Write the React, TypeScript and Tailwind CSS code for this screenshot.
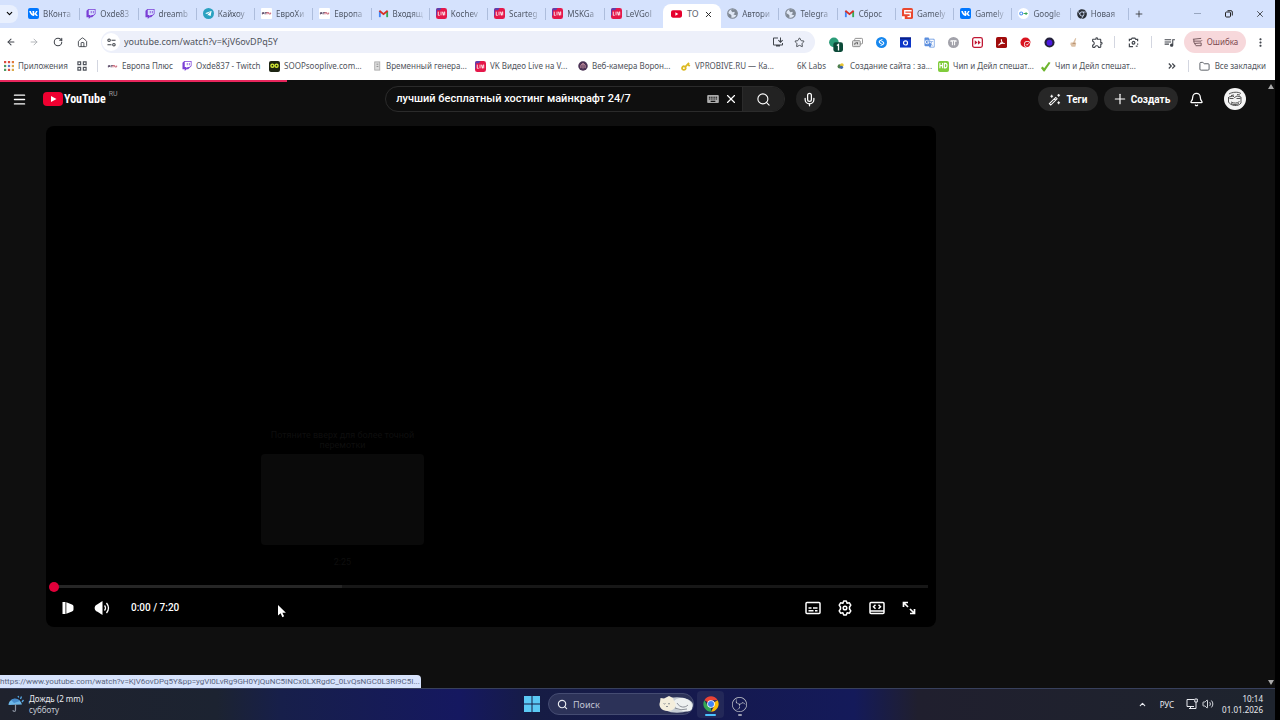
import type { ReactNode } from "react";
import {
  ArrowLeft, ArrowRight, ChevronDown, ChevronUp, Folder, House,
  Menu, Mic, Plus, RotateCw, Search, Star, X, Volume2, Bell,
} from "lucide-react";
import { FaTwitch, FaVk, FaTelegramPlane, FaChrome } from "react-icons/fa";
import { MdQueueMusic, MdOutlineInstallDesktop, MdMoreVert, MdGTranslate, MdOutlineExtension, MdKeyboard, MdVpnKey } from "react-icons/md";
import { SiObsstudio } from "react-icons/si";

const Sq = ({ cls, children }: { cls: string; children?: ReactNode }) => (
  <span className={`flex size-[11px] shrink-0 items-center justify-center overflow-hidden rounded-[2px] ${cls}`}>{children}</span>
);

const VkIcon = () => <Sq cls="bg-[#0077ff] text-white"><FaVk size={9} /></Sq>;
const TwitchIcon = () => <FaTwitch size={10} className="shrink-0 text-[#7b3fd6]" />;
const TelegramIcon = () => (
  <span className="flex size-[11px] shrink-0 items-center justify-center rounded-full bg-[#2aa1c0] text-white"><FaTelegramPlane size={7} /></span>
);
const EuropaIcon = () => (
  <svg viewBox="0 0 12 12" className="size-[11px] shrink-0">
    <rect width="12" height="12" rx="1" fill="#fff" />
    <path d="M1.500 7V5h2M1.500 6h2M4.500 7V5h2" stroke="#5a4a68" fill="none" />
    <path d="M6.500 7V5h2v1.500h2V5" stroke="#c65a6c" fill="none" />
  </svg>
);
const GmailIcon = () => (
  <svg viewBox="0 0 12 12" className="size-[11px] shrink-0" fill="none" strokeWidth="2">
    <path d="M2 10V3.500" stroke="#4285f4" />
    <path d="M10 10V3.500" stroke="#34a853" />
    <path d="M1.500 3 6 6.700 10.500 3" stroke="#d93025" />
  </svg>
);
const LiveIcon = () => (
  <svg viewBox="0 0 12 12" className="size-[11px] shrink-0">
    <rect width="12" height="12" rx="2.500" fill="#e5184a" />
    <path d="M0 9V2.500A2.500 2.500 0 0 1 2.500 0H6z" fill="#5b3fb0" />
    <path d="M1 2.500h10v7H1z" fill="#e5184a" />
    <path d="M2.500 4v4h1.500M5.500 4v4M7 4l1 4 1-4M9.500 4v4" stroke="#fff" strokeWidth=".9" fill="none" />
  </svg>
);
const YtIcon = () => (
  <svg viewBox="0 0 12 8" className="h-[8px] w-[11px] shrink-0">
    <rect width="12" height="8" rx="2" fill="#e6002d" />
    <path d="m4.800 2 3.200 2-3.200 2z" fill="#fff" />
  </svg>
);
const GlobeIcon = () => (
  <svg viewBox="0 0 12 12" className="size-[11px] shrink-0">
    <circle cx="6" cy="6" r="5.200" fill="#dfe7f5" stroke="#7f8894" strokeWidth="1.300" />
    <path d="M1 5.500 4 7l1 1.500L4.500 11 2 9.500zM5 1l-.5 2L6 4.500 8 4l.5 1.500L7 7l2 .5 1.500.5 1-2.500L9.500 2z" fill="#7f8894" />
  </svg>
);
const GamelyIcon = () => (
  <svg viewBox="0 0 12 12" className="size-[11px] shrink-0">
    <rect width="12" height="12" rx="2" fill="#e9472f" />
    <path d="M10.500 3H3v3h6v3.500H6" stroke="#fff" strokeWidth="1.400" fill="none" />
    <path d="M0 9h3v3H0z" fill="#fff" />
  </svg>
);
const GoogleKeyIcon = () => (
  <svg viewBox="0 0 12 12" className="size-[11px] shrink-0">
    <circle cx="6" cy="6" r="6" fill="#fff" />
    <circle cx="3.500" cy="6" r="1.600" fill="none" stroke="#4a8df0" strokeWidth="1.100" />
    <path d="M6 6h4.500M8.800 4.500v3" stroke="#3aa757" strokeWidth="1.200" />
  </svg>
);
const ChromeDark = () => <FaChrome size={10} className="shrink-0 text-[#2b3038]" />;
const ChromeColor = () => (
  <svg viewBox="0 0 48 48" className="size-4">
    <path d="M24 24 4.100 12.500A23 23 0 0 1 43.900 12.500H24z" fill="#ea4335" />
    <path d="M24 24 43.900 12.500A23 23 0 0 1 24 47L34 29.500z" fill="#fbbc04" />
    <path d="M24 24 24 47A23 23 0 0 1 4.100 12.500L14 29.500z" fill="#34a853" />
    <circle cx="24" cy="24" r="11.500" fill="#fff" />
    <circle cx="24" cy="24" r="9" fill="#4285f4" />
  </svg>
);

const tabs: { icon: ReactNode; label: string; active?: boolean }[] = [
  { icon: <VkIcon />, label: "ВКонта" },
  { icon: <TwitchIcon />, label: "Oxde83" },
  { icon: <TwitchIcon />, label: "dreamb" },
  { icon: <TelegramIcon />, label: "Кайхоу" },
  { icon: <EuropaIcon />, label: "ЕвроХи" },
  { icon: <EuropaIcon />, label: "Европа" },
  { icon: <GmailIcon />, label: "Входящ" },
  { icon: <LiveIcon />, label: "Kochev" },
  { icon: <LiveIcon />, label: "Scarteg" },
  { icon: <LiveIcon />, label: "MSKGa" },
  { icon: <LiveIcon />, label: "LeVGol" },
  { icon: <YtIcon />, label: "ТО", active: true },
  { icon: <GlobeIcon />, label: "Автори" },
  { icon: <GlobeIcon />, label: "Telegra" },
  { icon: <GmailIcon />, label: "Сброс" },
  { icon: <GamelyIcon />, label: "Gamely" },
  { icon: <VkIcon />, label: "Gamely" },
  { icon: <GoogleKeyIcon />, label: "Google" },
  { icon: <ChromeDark />, label: "Новая" },
];

function TabStrip() {
  return (
    <div className="flex h-7 items-stretch bg-[#d5e2fd] font-['Noto_Sans','Open_Sans',sans-serif]">
      <button aria-label="Поиск вкладок" className="flex w-[22px] items-center pb-px">
        <span className="flex h-[18px] w-[18px] items-center justify-center rounded-r-lg bg-[#e9f0fe]"><ChevronDown size={9} strokeWidth={3} /></span>
      </button>
      <div role="tablist" className="grid flex-1 grid-cols-[repeat(19,minmax(0,1fr))]">
        {tabs.map((t, i) =>
          t.active ? (
            <div key={i} className="mt-1 flex items-center rounded-t-lg bg-white pb-1 pl-2">
              <button role="tab" aria-selected="true" className="flex items-center gap-[5px] text-[9px] text-[#5f6470]">{t.icon}{t.label}</button>
              <button aria-label="Закрыть вкладку" className="ml-auto mr-2 text-[#222]"><X size={9} strokeWidth={2.500} /></button>
            </div>
          ) : (
            <button key={i} role="tab" aria-selected="false" className="flex min-w-0 items-center gap-1 pb-px pl-[6px] text-[8px] text-[#4f5766]">
              {t.icon}
              <span className="min-w-0 flex-1 whitespace-nowrap text-left [mask-image:linear-gradient(to_right,#000_60%,transparent)]">{t.label}</span>
              <span className={`h-3 w-px shrink-0 ${i === 10 ? "" : "bg-[#adbddc]"}`} />
            </button>
          )
        )}
      </div>
      <button aria-label="Новая вкладка" className="flex w-5 items-center justify-center pb-px text-[#333]"><Plus size={10} /></button>
      <div className="ml-[33px] flex pb-px text-[#222]">
        <button aria-label="Свернуть" className="flex w-[31px] items-center justify-center"><span className="h-px w-[7px] bg-[#98a6bf]" /></button>
        <button aria-label="Развернуть" className="flex w-[31px] items-center justify-center">
          <svg viewBox="0 0 8 8" className="size-2" fill="none" stroke="currentColor"><rect x=".5" y="2" width="5" height="5" rx="1" /><path d="M2.500.7H6A1.300 1.300 0 0 1 7.300 2v3.500" /></svg>
        </button>
        <button aria-label="Закрыть" className="flex w-[31px] items-center justify-center"><X size={10} strokeWidth={1.800} /></button>
      </div>
    </div>
  );
}

const extensions: { name: string; icon: ReactNode }[] = [
  {
    name: "Блокировщик",
    icon: <svg viewBox="0 0 14 14" className="mt-1 ml-1 size-[15px]"><circle cx="5.500" cy="5" r="4.500" fill="#2b9c78" /><rect x="5" y="5" width="9" height="9" rx="2" fill="#0b4a38" /><path d="m8.300 8 1.500-1v5.500" stroke="#fff" strokeWidth="1.200" fill="none" /></svg>,
  },
  {
    name: "Окна",
    icon: <svg viewBox="0 0 12 12" className="size-[11px]" fill="none" stroke="#888"><rect x="3" y="1.500" width="8.500" height="6" rx="1" /><rect x=".5" y="4" width="8.500" height="6.500" rx="1" fill="#ddd" /><path d="M3 8.500V7l3-1v2" stroke="#555" /></svg>,
  },
  {
    name: "Shazam",
    icon: <svg viewBox="0 0 12 12" className="size-[11px]"><circle cx="6" cy="6" r="6" fill="#1787ee" /><path d="M6 7.300C3.500 6.500 2.800 4.800 4.300 4L7 2.600M6 4.700c2.500.8 3.200 2.500 1.700 3.300L5 9.400" stroke="#fff" strokeWidth="1.200" fill="none" /></svg>,
  },
  {
    name: "Камера",
    icon: <svg viewBox="0 0 12 12" className="size-[11px]"><rect y=".5" width="12" height="11" fill="#0c36c8" /><path d="M0 .5h12v2H0z" fill="#0a1f86" /><circle cx="6" cy="6.500" r="2.200" fill="none" stroke="#fff" strokeWidth="1.300" /></svg>,
  },
  { name: "Переводчик", icon: <MdGTranslate size={11} className="text-[#5b8ede]" /> },
  {
    name: "Tampermonkey",
    icon: <svg viewBox="0 0 12 12" className="size-[11px]"><circle cx="6" cy="6" r="6" fill="#a2a2aa" /><path d="M3 4h6M4.800 4v5M7.200 4v5M3.300 3.500v2M8.700 3.500v2" stroke="#fff" strokeWidth="1.100" /></svg>,
  },
  {
    name: "Ускоритель",
    icon: <svg viewBox="0 0 12 12" className="size-[11px]"><rect x=".7" y=".7" width="10.600" height="10.600" rx="2" fill="#fff" stroke="#c01834" strokeWidth="1.400" /><path d="m3 3.500 3 2.500-3 2.500zM6.500 3.500l3 2.500-3 2.500z" fill="#c01834" /></svg>,
  },
  {
    name: "Acrobat",
    icon: <svg viewBox="0 0 12 12" className="size-[11px]"><rect width="12" height="12" rx="2" fill="#a00c0c" /><path d="M5.800 2.500c1 2.500-1 5-3 6.500 1.500-1.800 4.500-2.500 6.700-2C7.500 7.500 5.500 5 5.800 2.500" stroke="#fff" strokeWidth="1.100" fill="none" /></svg>,
  },
  {
    name: "Блокировка",
    icon: <svg viewBox="0 0 12 12" className="size-[11px]"><circle cx="6" cy="6" r="5.500" fill="#d9141f" /><circle cx="8" cy="8" r="3.600" fill="#fff" /><circle cx="8" cy="8" r="2.800" fill="#d9141f" /><path d="m6.700 8 1 1 1.700-2" stroke="#fff" fill="none" /></svg>,
  },
  {
    name: "Тема",
    icon: <svg viewBox="0 0 12 12" className="size-[11px]"><circle cx="6" cy="6" r="5.500" fill="#23203a" /><circle cx="6" cy="6.300" r="3.200" fill="#4b1ae0" /></svg>,
  },
  {
    name: "Жест",
    icon: <svg viewBox="0 0 12 12" className="size-[11px]"><path d="M3 6h2.500L8 1l1 .5L7.800 5.500 9 7 8 10.500H4L2.500 8z" fill="#dcc1a6" /><path d="M5 7h3" stroke="#b48b6a" /></svg>,
  },
];

function Toolbar() {
  return (
    <div className="flex h-7 items-center bg-white font-['Noto_Sans','Open_Sans',sans-serif] text-[#41454c]">
      <div className="flex">
        <button aria-label="Назад" className="flex w-[22px] justify-center"><ArrowLeft size={10} strokeWidth={2.500} /></button>
        <button aria-label="Вперёд" className="flex w-6 justify-center text-[#a5a8ad]"><ArrowRight size={10} /></button>
        <button aria-label="Обновить" className="flex w-6 justify-center"><RotateCw size={10} strokeWidth={2.500} /></button>
        <button aria-label="Главная" className="flex w-6 justify-center"><House size={11} /></button>
      </div>
      <div className="ml-[7px] flex h-[22px] flex-1 items-center rounded-full bg-[#edf0fa] pl-[1px] pr-[10px]">
        <button aria-label="Сведения о сайте" className="flex size-[18px] items-center justify-center rounded-full bg-white">
          <svg viewBox="0 0 10 10" className="size-[9px]" fill="none" stroke="currentColor" strokeWidth="1.200"><circle cx="2.300" cy="2.500" r="1.400" /><path d="M5 2.500h4.500M.5 7.500H5" /><circle cx="7.700" cy="7.500" r="1.400" /></svg>
        </button>
        <input aria-label="Адресная строка" defaultValue="youtube.com/watch?v=KjV6ovDPq5Y" className="ml-1 min-w-0 flex-1 bg-transparent text-[9px] text-[#50545c] outline-none" />
        <button aria-label="Установить" className="mr-[10px]"><MdOutlineInstallDesktop size={12} /></button>
        <button aria-label="Добавить в закладки"><Star size={11} /></button>
      </div>
      <div className="flex pl-[6px]">
        {extensions.map((e) => (
          <button key={e.name} aria-label={e.name} className="flex h-5 w-6 items-center justify-center">{e.icon}</button>
        ))}
        <button aria-label="Расширения" className="flex h-5 w-6 items-center justify-center"><MdOutlineExtension size={13} /></button>
      </div>
      <span className="ml-[5px] h-3 w-px bg-[#d3d6e0]" />
      <button aria-label="Объектив" className="flex w-9 justify-center">
        <svg viewBox="0 0 12 12" className="size-[11px]" fill="none" stroke="currentColor" strokeWidth="1.300"><path d="M1.500 4.500v-2h2l1-1.200h3l1 1.200h2v2M1.500 7v3.500h4M10.500 7v1.500" /><circle cx="6" cy="6.300" r="1.500" /><path d="M8.500 10h2" /></svg>
      </button>
      <span className="h-3 w-px bg-[#d3d6e0]" />
      <button aria-label="Медиа" className="flex w-8 justify-center pl-[3px]"><MdQueueMusic size={13} /></button>
      <button className="flex h-[22px] w-[62px] items-center justify-center gap-1 rounded-full bg-[#f7d8db] text-[8px] text-[#7d4a50]">
        <svg viewBox="0 0 12 12" className="size-[11px]" fill="none" stroke="#6c5055"><path d="M1 2.500 10 1.500M2 4.500h8l1-1M3 7l7-.5M4 9.500h6M2 2.500v3L4 9M10 6.500v3" /></svg>
        Ошибка
      </button>
      <button aria-label="Меню браузера" className="flex w-[29px] justify-center"><MdMoreVert size={13} /></button>
    </div>
  );
}

const appDots = ["#d94a3d", "#d94a3d", "#e0793b", "#4c9a63", "#5a7ac9", "#dba94a", "#4c9a63", "#d94a3d", "#dba94a"];
const AppsIcon = () => (
  <svg viewBox="0 0 9 9" className="size-[10px] shrink-0">
    {appDots.map((c, i) => <rect key={i} x={(i % 3) * 3.500} y={Math.floor(i / 3) * 3.500} width="2" height="2" fill={c} />)}
  </svg>
);

const bookmarks: { w: string; icon: ReactNode; label: string }[] = [
  { w: "w-[75px]", icon: <EuropaIcon />, label: "Европа Плюс" },
  { w: "w-[87px]", icon: <TwitchIcon />, label: "Oxde837 - Twitch" },
  { w: "w-[103px]", icon: <Sq cls="bg-[#1d2412] text-[#d7ee36]"><svg viewBox="0 0 10 6" className="w-[9px]" fill="none" stroke="currentColor" strokeWidth="1.500"><circle cx="2.700" cy="3" r="1.700" /><circle cx="7.300" cy="3" r="1.700" /></svg></Sq>, label: "SOOPsooplive.com..." },
  { w: "w-[103px]", icon: <svg viewBox="0 0 11 11" className="size-[10px] shrink-0" fill="#ddd" stroke="#aaa"><rect x="3" y="1" width="5.500" height="9" /><path d="M5 3.500h2M5 6h2" stroke="#888" /></svg>, label: "Временный генера..." },
  { w: "w-[103px]", icon: <LiveIcon />, label: "VK Видео Live на V..." },
  { w: "w-[102px]", icon: <svg viewBox="0 0 12 12" className="size-[10px] shrink-0"><circle cx="6" cy="6" r="5.700" fill="#4b3355" /><path d="M3.500 8.500V5L6 3l2.500 2v3.500M6 3v6" stroke="#e5a6b2" fill="none" /></svg>, label: "Веб-камера Ворон..." },
  { w: "w-[102px]", icon: <MdVpnKey size={11} className="shrink-0 -rotate-45 text-[#dcb922]" />, label: "VPROBIVE.RU — Ка..." },
  { w: "w-[54px]", icon: <span className="size-[11px] shrink-0" />, label: "6K Labs" },
  { w: "w-[102px]", icon: <svg viewBox="0 0 11 11" className="size-[10px] shrink-0"><circle cx="4" cy="6" r="2.300" fill="#50804d" /><circle cx="6.500" cy="4.500" r="2" fill="#e8c532" /><circle cx="6" cy="7" r="1.800" fill="#3f66ad" /></svg>, label: "Создание сайта : за..." },
  { w: "w-[102px]", icon: <Sq cls="bg-[#80cc3c] text-white"><svg viewBox="0 0 10 8" className="w-[9px]" fill="none" stroke="currentColor" strokeWidth="1.200"><path d="M1 1v6M4 1v6M1 4h3M6 1.500h1c2.500 0 2.500 5 0 5H6z" /></svg></Sq>, label: "Чип и Дейл спешат..." },
  { w: "w-[102px]", icon: <svg viewBox="0 0 12 12" className="size-[11px] shrink-0"><path d="m1 7.500 2-1.500 1.500 2L9.500 1 11.500 2 5 11.500H4z" fill="#6eb52f" /></svg>, label: "Чип и Дейл спешат..." },
];

function BookmarkBar() {
  return (
    <nav aria-label="Закладки" className="flex h-6 items-center bg-white pb-1 pl-1 font-['Noto_Sans','Open_Sans',sans-serif] text-[8px] text-[#4f535b]">
      <a href="#apps" className="flex w-[73px] items-center gap-1 whitespace-nowrap"><AppsIcon />Приложения</a>
      <a href="#groups" aria-label="Группы вкладок" className="flex w-5 items-center">
        <svg viewBox="0 0 11 11" className="size-[10px]" fill="none" stroke="#50545c" strokeWidth="1.300"><path d="M1 1h3v3H1zM7 1h3v3H7zM1 7h3v3H1zM7 7h3v3H7z" /></svg>
      </a>
      <span className="mr-[9px] h-3 w-px bg-[#d3d6e0]" />
      {bookmarks.map((b, i) => (
        <a key={i} href="#bookmark" className={`flex shrink-0 items-center gap-1 whitespace-nowrap ${b.w}`}>{b.icon}{b.label}</a>
      ))}
      <button aria-label="Другие закладки" className="ml-auto pr-3">
        <svg viewBox="0 0 8 6" className="h-[6px] w-2" fill="none" stroke="#41454c" strokeWidth="1.200"><path d="m.8.500 2.500 2.500L.8 5.500M4.300.5 6.800 3 4.300 5.500" /></svg>
      </button>
      <span className="mr-[10px] h-3 w-px bg-[#d3d6e0]" />
      <a href="#all" className="flex items-center gap-[5px] whitespace-nowrap pr-[9px]"><Folder size={11} />Все закладки</a>
    </nav>
  );
}

function YtHeader() {
  return (
    <header className="flex h-[34px] items-center text-white">
      <button aria-label="Меню" className="ml-3">
        <Menu size={15} strokeWidth={2.300} />
      </button>
      <a href="#home" aria-label="YouTube" className="ml-4 flex items-center">
        <svg viewBox="0 0 20 14" className="h-[14px] w-[20px]"><rect width="20" height="14" rx="4" fill="#f00030" /><path d="m8 4 5.500 3L8 10z" fill="#fff" /></svg>
        <span className="ml-px font-['Roboto_Condensed','Liberation_Sans_Narrow',sans-serif] text-[12px] font-bold leading-none">YouTube</span>
        <span className="-mt-px ml-[3px] self-start text-[7px] leading-none text-[#999]">RU</span>
      </a>
      <div className="ml-auto flex items-center pl-[52px]">
        <form role="search" className="flex h-[26px] w-[400px] overflow-hidden rounded-full border border-[#2b2b2b]">
          <input aria-label="Поиск" defaultValue="лучший бесплатный хостинг майнкрафт 24/7" className="min-w-0 flex-1 bg-transparent pl-[10px] text-[11px] font-medium outline-none" />
          <button type="button" aria-label="Клавиатура" className="text-[#aaa]"><MdKeyboard size={14} /></button>
          <button type="button" aria-label="Очистить" className="px-1"><X size={14} /></button>
          <button type="button" aria-label="Найти" className="flex w-[42px] items-center justify-center border-l border-[#2b2b2b] bg-[#222]"><Search size={15} strokeWidth={1.800} /></button>
        </form>
        <button aria-label="Голосовой поиск" className="ml-[11px] flex size-[26px] items-center justify-center rounded-full bg-[#222]"><Mic size={15} /></button>
      </div>
      <div className="ml-auto flex items-center pr-[20px] text-[10px] font-bold">
        <button className="mr-[6px] flex h-6 w-[60px] items-center justify-center gap-[5px] rounded-full bg-[#272727]">
          <svg viewBox="0 0 14 14" className="size-[13px]" fill="none" stroke="currentColor" strokeWidth="1.100"><path d="m1.500 11.500 6.800-6.800 1.500 1.500-6.800 6.800zM6.700 6.300 8.200 7.800M4 2v3M2.500 3.500h3M11.500 1v3M10 2.500h3M11.500 9v3M10 10.500h3" /></svg>
          Теги
        </button>
        <button className="mr-[11px] flex h-6 w-[74px] items-center justify-center gap-[3px] rounded-full bg-[#272727]"><Plus size={16} strokeWidth={1.800} />Создать</button>
        <button aria-label="Уведомления" className="mr-[20px]"><Bell size={15} /></button>
        <button aria-label="Профиль">
          <svg viewBox="0 0 22 22" className="size-[22px]"><circle cx="11" cy="11" r="11" fill="#f4f4f4" /><path d="M5 6c3-2 9-2.500 12-.5M5 9l4-1 1.500 1.500L13 8l4 1M5.500 10.500h4M12.500 10.500h4M4.500 9v5c2 4 10 5 12.500 1V9M7 14c3 1.500 6 1.500 8.500-.5M7 15.500c3 1.500 5 1.500 8 0M7 7.500l3-.5M13 6.500l3 .5" fill="none" stroke="#444" strokeWidth=".9" /></svg>
        </button>
      </div>
    </header>
  );
}

function Player() {
  return (
    <section aria-label="Видеоплеер" className="relative flex aspect-video min-w-0 flex-1 flex-col justify-end rounded-lg bg-black px-2 text-white">
      <div className="absolute bottom-[60px] left-[215px] flex w-[163px] flex-col items-center text-[9px] leading-[10px] text-[#0e0e0e]">
        <p className="text-center">Потяните вверх для более точной перемотки</p>
        <div className="mb-3 mt-1 h-[91px] w-full rounded bg-[#0a0a0a]" />
        <span>2:25</span>
      </div>
      <div className="relative flex h-[10px] items-center">
        <div className="h-[3px] w-[33%] bg-[#262626]" />
        <div className="h-[3px] flex-1 bg-[#171717]" />
        <span className="absolute -left-[5px] size-[10px] rounded-full bg-[#e1003a]" />
      </div>
      <div className="flex h-[35px] items-center pb-[3px] pl-[6px]">
        <button aria-label="Смотреть" className="flex w-4 justify-center">
          <svg viewBox="0 0 14 14" className="size-[14px]" fill="currentColor"><path d="M1.500 1h3v12h-3zM5.300 1.200 11 3.500q1.500.7 1.500 2v3q0 1.300-1.500 2l-5.700 2.300z" /></svg>
        </button>
        <button aria-label="Звук" className="ml-[18px]">
          <svg viewBox="0 0 16 16" className="size-4"><path d="M8.500 1v14L3.500 11.800C-.3 10.500-.3 5.500 3.500 4.200z" fill="currentColor" /><path d="M10.500 5.500q2 2.500 0 5M12.500 3q4 5 0 10" stroke="currentColor" strokeWidth="1.300" fill="none" /></svg>
        </button>
        <span className="ml-[21px] text-[10px] font-medium">0:00 / 7:20</span>
        <div className="ml-auto flex gap-4 pr-[11px]">
          <button aria-label="Субтитры">
            <svg viewBox="0 0 16 16" className="size-4" fill="none" stroke="currentColor" strokeWidth="1.500"><rect x="1" y="2.500" width="14" height="11" rx="1" /><path d="M3.500 8h3M8 8h4.500M3.500 10.800h5M10 10.800h2.500" /></svg>
          </button>
          <button aria-label="Настройки">
            <svg viewBox="0 0 16 16" className="size-4" fill="none" stroke="currentColor" strokeWidth="1.500" strokeLinejoin="round"><path d="M6.700 1h2.600l.8 2.200 2.300-.4 1.400 2.300L12.500 7v2l1.300 1.900-1.400 2.300-2.300-.4L9.300 15H6.700l-.8-2.200-2.300.4-1.400-2.300L3.500 9V7L2.200 5.100l1.400-2.300 2.300.4z" /><circle cx="8" cy="8" r="1.800" /></svg>
          </button>
          <button aria-label="Широкий экран">
            <svg viewBox="0 0 16 16" className="size-4" fill="none" stroke="currentColor" strokeWidth="1.500"><rect x="1" y="2.500" width="14" height="11" rx="1" /><path d="M1 11h14M6.500 4.700l-2 2 2 2M9.500 4.700l2 2-2 2" /></svg>
          </button>
          <button aria-label="Во весь экран">
            <svg viewBox="0 0 16 16" className="size-4" fill="none" stroke="currentColor" strokeWidth="1.700"><path d="M2.500 7V2.500H7M2.500 2.500l4.500 4.500M13.500 9v4.500H9M13.500 13.500 9 9" /></svg>
          </button>
        </div>
      </div>
      <svg viewBox="0 0 10 16" className="absolute bottom-[9px] left-[231px] h-[14px] w-[9px]"><path d="M1 1v12l3-2.500L6 15l2-1-2-4h4z" fill="#fff" /></svg>
    </section>
  );
}

function Taskbar() {
  return (
    <footer className="grid h-8 grid-cols-[1fr_auto_1fr] items-center border-t border-[#38405c] bg-[linear-gradient(to_right,#1f222d_0%,#1c2331_17%,#171f4a_22%,#151860_36%,#161c44_42%,#15194e_55%,#141a5a_67%,#201f2e_72%,#1e242e_100%)] pb-px font-['Noto_Sans','Open_Sans',sans-serif] text-[8px] leading-[11px] text-[#e9ebf0]">
      <button className="flex items-center gap-[5px] pl-2 text-left">
        <svg viewBox="0 0 16 18" className="h-[18px] w-4"><path d="M.5 10C1 2.500 12 2 14 9.500z" fill="#6db7e9" /><path d="M3 5C6 2.500 10 3 12 6l-6 2z" fill="#468bcb" /><path d="M7.500 9v6c0 2-2.500 2-2.500 0" stroke="#8b93a1" strokeWidth="1.200" fill="none" /><path d="m10 1 .8 1.500M13.500 1.500 12.500 4M15.500 5 14 7" stroke="#57a9e5" strokeWidth="1.300" /></svg>
        <span><span className="block">Дождь (2 mm)</span><span className="block text-[#c4c8d2]">субботу</span></span>
      </button>
      <div className="flex items-center pl-[2px]">
        <button aria-label="Пуск" className="mr-2">
          <svg viewBox="0 0 16 16" className="size-4"><path d="M0 0h7.500v7.500H0zM8.500 0H16v7.500H8.500zM0 8.500h7.500V16H0zM8.500 8.500H16V16H8.500z" fill="#5bc9f5" /></svg>
        </button>
        <div className="flex h-[22px] w-[146px] items-center rounded-full border border-[#454c72] bg-[#2c3258] pl-2">
          <Search size={11} strokeWidth={2.500} className="shrink-0" />
          <input aria-label="Поиск в Windows" placeholder="Поиск" className="ml-[5px] min-w-0 flex-1 bg-transparent text-[9px] outline-none placeholder:text-[#c1c5d5]" />
          <svg viewBox="0 0 34 18" className="h-[18px] w-[34px] shrink-0"><ellipse cx="18" cy="10" rx="16" ry="7.800" fill="#c5ccd3" /><path d="M14 8c2-7 17-7 19 2s-9 7-15 4" fill="#edf0f0" /><path d="m1 7 .5-4L5 3.500 10 1l4 2 1 3c4 5 0 10-6 10S-1 12 1 7" fill="#f4eedc" /><path d="M4.500 8.500q1 1 2 0M9 8.500q1 1 2 0M7 11l1 1 1-1M18 8c3 5 8 5 11 2M16 13q6 3 12 1" stroke="#717680" strokeWidth=".8" fill="none" /></svg>
        </div>
        <button aria-label="Google Chrome" className="ml-[3px] flex h-[27px] w-[27px] flex-col items-center justify-end gap-[2px] rounded bg-[#232858] pb-[2px]"><ChromeColor /><span className="h-[2px] w-[11px] rounded bg-[#4cc2ff]" /></button>
        <button aria-label="OBS Studio" className="ml-[2px] flex h-[27px] w-[27px] flex-col items-center justify-end gap-[2px] pb-[2px]"><SiObsstudio size={15} className="text-[#c3c5cc]" /><span className="h-[2px] w-1 rounded bg-[#9a9db0]" /></button>
      </div>
      <div className="flex items-center justify-end pr-3">
        <button aria-label="Скрытые значки" className="mr-[13px]"><ChevronUp size={9} strokeWidth={3} /></button>
        <button className="mr-3">РУС</button>
        <button aria-label="Сеть" className="mr-1">
          <svg viewBox="0 0 12 12" className="size-3" fill="none" stroke="currentColor"><path d="M8 1.500H1v7h7M3 10.500h5M4.500 8.500v2M10 4v6.500H8M8.800 1h2.500v3H8.800z" /></svg>
        </button>
        <button aria-label="Громкость" className="mr-2"><Volume2 size={12} strokeWidth={1.800} /></button>
        <button className="text-right"><span className="block">10:14</span><span className="block">01.01.2026</span></button>
      </div>
    </footer>
  );
}

export default function App() {
  return (
    <div className="flex min-h-screen flex-col bg-black pr-[5px] font-['Roboto',sans-serif]">
      <TabStrip />
      <Toolbar />
      <BookmarkBar />
      <main className="relative flex flex-1 bg-[#0f0f0f]">
        <div className="flex min-w-0 flex-1 flex-col">
          <div className="h-[2px] w-[287px] bg-[#e8265c]" />
          <YtHeader />
          <div className="flex items-start pl-[46px] pt-[10px]">
            <Player />
            <aside className="w-[330px] shrink-0" />
          </div>
        </div>
        <div className="flex w-[9px] flex-col items-center justify-between pb-[3px] pt-1">
          <svg viewBox="0 0 6 5" className="h-[5px] w-[6px]"><path d="M3 0 6 5H0z" fill="#aaa" /></svg>
          <svg viewBox="0 0 6 5" className="h-[5px] w-[6px]"><path d="M3 5 6 0H0z" fill="#aaa" /></svg>
        </div>
        <div className="absolute bottom-0 left-0 w-[421px] whitespace-nowrap rounded-tr bg-[#d7e3fc] text-[8px] leading-[13px] text-[#5a6580]">
          https://www.youtube.com/watch?v=KjV6ovDPq5Y&amp;pp=ygVl0LvRg9GH0YjQuNC5INCx0LXRgdC_0LvQsNGC0L3Ri9C5I...
        </div>
      </main>
      <Taskbar />
    </div>
  );
}
